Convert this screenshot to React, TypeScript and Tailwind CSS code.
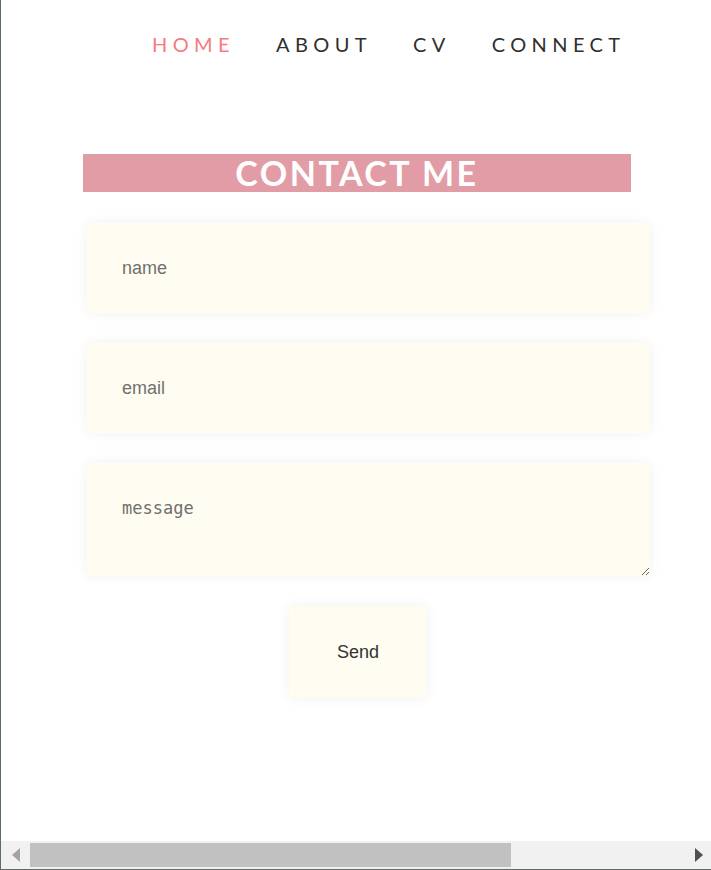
const NAV = ['HOME', 'ABOUT', 'CV', 'CONNECT'];

export default function App() {
  return (
    <div className="w-[711px] h-[870px] flex flex-col bg-white border-l border-b border-[#5d6c65] overflow-hidden">
      <div className="flex-1 flex flex-col">
        {/* Nav */}
        <nav className="flex gap-[41px] pl-[151px] pt-[32px] font-['Lato',sans-serif] text-[20px] leading-[24px] tracking-[5.4px]">
          {NAV.map((item, i) => (
            <a key={item} className={i === 0 ? 'text-[#f57b80]' : 'text-[#2f2f2f]'}>
              {item}
            </a>
          ))}
        </nav>

        {/* Heading */}
        <h1 className="ml-[82px] mt-[98px] w-[548px] h-[38px] bg-[#e29ca6] text-center text-white font-['Lato',sans-serif] font-bold text-[34px] leading-[38px] tracking-[2.5px]">
          CONTACT ME
        </h1>

        {/* Form */}
        <form className="flex flex-col gap-[30px] mt-[31px] ml-[86px] w-[563px]">
          <input
            placeholder="name"
            className="h-[90px] px-[35px] bg-[#fffdf1] shadow-[0_0_12px_rgba(0,0,0,0.06)] outline-none font-['Liberation_Sans',Arial,sans-serif] text-[18px] placeholder:text-[#707070]"
          />
          <input
            placeholder="email"
            className="h-[90px] px-[35px] bg-[#fffdf1] shadow-[0_0_12px_rgba(0,0,0,0.06)] outline-none font-['Liberation_Sans',Arial,sans-serif] text-[18px] placeholder:text-[#707070]"
          />
          <textarea
            placeholder="message"
            className="h-[113px] px-[35px] pt-[35px] bg-[#fffdf1] shadow-[0_0_12px_rgba(0,0,0,0.06)] outline-none font-['DejaVu_Sans_Mono',monospace] text-[17px] leading-[20px] placeholder:text-[#707070]"
          />
          <button
            type="button"
            className="self-start ml-[202px] w-[138px] h-[92px] bg-[#fffdf1] shadow-[0_0_12px_rgba(0,0,0,0.06)] text-[#333333] font-['Liberation_Sans',Arial,sans-serif] text-[18px]"
          >
            Send
          </button>
        </form>
      </div>

      {/* Horizontal scrollbar */}
      <div className="h-[28px] bg-[#f1f1f1] flex items-center">
        <svg width="8" height="14" viewBox="0 0 8 14" className="ml-[11px]">
          <path d="M8 0 L0 7 L8 14 Z" fill="#a3a3a3" />
        </svg>
        <div className="ml-[10px] w-[481px] h-[24px] bg-[#c1c1c1]" />
        <div className="flex-1" />
        <svg width="8" height="14" viewBox="0 0 8 14" className="mr-[8px]">
          <path d="M0 0 L8 7 L0 14 Z" fill="#505050" />
        </svg>
      </div>
    </div>
  );
}
